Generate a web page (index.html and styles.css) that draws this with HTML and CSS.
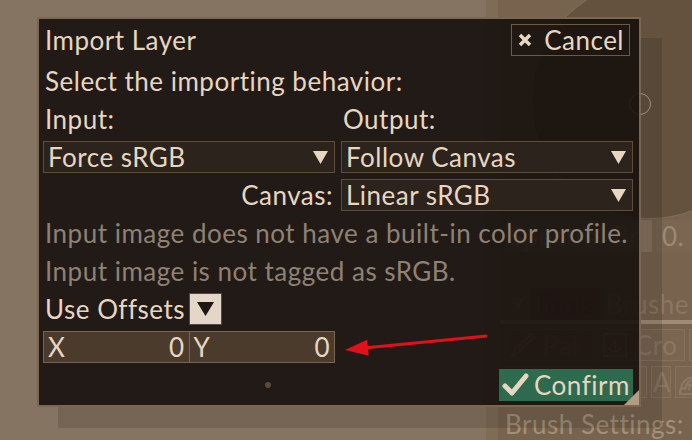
FILE: index.html
```html
<!DOCTYPE html>
<html lang="en">
<head>
    <meta charset="UTF-8">
    <title>Import Layer</title>
    <link rel="stylesheet" href="styles.css">
</head>
<body>
    <div class="screen">
        <div class="workspace"></div>

        <!-- right dock, dimmed behind the modal -->
        <aside class="dock">
            <div class="picker">
                <div class="wheel"></div>
                <div class="wheel-cursor"></div>
            </div>
            <div class="dock-row preset">
                <span class="dock-btn wide">Spectral Br</span>
                <span class="dock-field">0.</span>
            </div>
            <div class="tabs">
                <span class="fold">
                    <svg width="15" height="13" viewBox="0 0 15 13"><polygon points="0,0 15,0 7.5,13"/></svg>
                </span>
                <span class="tab active">Tools</span>
                <span class="tab">Brushe</span>
            </div>
            <div class="dock-row tools">
                <span class="dock-btn">
                    <svg width="28" height="28" viewBox="0 0 28 28"><path d="M3 25 L6 18 L22 3 L25 6 L9 22 Z"/></svg>
                    Pai
                </span>
                <span class="dock-btn">
                    <svg width="28" height="28" viewBox="0 0 28 28"><rect x="3" y="3" width="22" height="22"/><path d="M7 17 L14 21 L21 17 M14 8 L14 20"/></svg>
                    Cro
                </span>
                <span class="dock-btn"></span>
            </div>
            <div class="dock-row tools">
                <span class="dock-btn"></span>
                <span class="dock-btn short"></span>
                <span class="dock-btn narrow">A</span>
                <span class="dock-btn icon">
                    <svg width="30" height="28" viewBox="0 0 30 28"><path d="M3 22 A13 13 0 0 1 29 22 M7 22 A9 9 0 0 1 29 22 M11 22 A5 5 0 0 1 29 22"/><path d="M2 26 Q1 20 7 20 Q9 15 14 18 Q19 18 18 26 Z"/></svg>
                </span>
            </div>
            <div class="dock-label">Brush Settings:</div>
        </aside>

        <div class="dialog">
            <div class="dialog-head">
                <span class="title">Import Layer</span>
                <button class="cancel">
                    <svg width="14" height="14" viewBox="0 0 14 14"><path d="M2 2 L12 12 M12 2 L2 12"/></svg>
                    Cancel
                </button>
            </div>
            <div class="line">Select the importing behavior:</div>
            <div class="columns">
                <div class="line">Input:</div>
                <div class="line">Output:</div>
                <div class="select">
                    <span>Force sRGB</span>
                    <svg width="15" height="13" viewBox="0 0 15 13"><polygon points="0,0 15,0 7.5,13"/></svg>
                </div>
                <div class="select">
                    <span>Follow Canvas</span>
                    <svg width="15" height="13" viewBox="0 0 15 13"><polygon points="0,0 15,0 7.5,13"/></svg>
                </div>
                <div class="line right">Canvas:</div>
                <div class="select">
                    <span>Linear sRGB</span>
                    <svg width="15" height="13" viewBox="0 0 15 13"><polygon points="0,0 15,0 7.5,13"/></svg>
                </div>
            </div>
            <div class="line muted">Input image does not have a built-in color profile.</div>
            <div class="line muted">Input image is not tagged as sRGB.</div>
            <div class="offsets">
                <span class="line">Use Offsets</span>
                <span class="check">
                    <svg width="17" height="14" viewBox="0 0 17 14"><polygon points="0,0 17,0 8.5,14"/></svg>
                </span>
            </div>
            <div class="xy">
                <div class="axis"><span>X</span><span>0</span></div>
                <div class="axis"><span>Y</span><span>0</span></div>
            </div>
            <div class="dialog-foot">
                <span class="dot"></span>
                <button class="confirm">
                    <svg width="27" height="24" viewBox="0 0 27 24"><path d="M3 13 L10 20 L24 3"/></svg>
                    Confirm
                </button>
            </div>
            <span class="grip"></span>
        </div>

        <svg class="arrow" width="692" height="440" viewBox="0 0 692 440">
            <line x1="487" y1="336" x2="364" y2="348"/>
            <polygon points="345,350 368.7,355.7 367.1,339.8"/>
        </svg>
    </div>
</body>
</html>
```

FILE: styles.css
```css
* {
    box-sizing: border-box;
}

body {
    margin: 0;
    background: #857461;
    font-family: 'Lato', 'Noto Sans', sans-serif;
    font-size: 26px;
    letter-spacing: 0.5px;
    color: #e6d6c2;
}

.screen {
    position: relative;
    display: flex;
    width: 692px;
    height: 440px;
    overflow: hidden;
}

.workspace {
    width: 486px;
    flex-shrink: 0;
    background: #857461;
}

/* Dock on the right */
.dock {
    flex: 1;
    display: flex;
    flex-direction: column;
    gap: 7px;
    padding-left: 7px;
    background: #77634e;
    border-left: 12px solid #7f6c57;
    color: #9c8a77;
    white-space: nowrap;
    overflow: hidden;
}

.picker {
    position: relative;
    height: 218px;
    margin-left: -19px;
}

.wheel {
    position: absolute;
    left: 46px;
    top: -18px;
    width: 236px;
    height: 236px;
    border-radius: 50%;
    background: #64523f;
    box-shadow: 0 0 0 1px #806c57;
}

.wheel-cursor {
    position: absolute;
    left: 143px;
    top: 93px;
    width: 22px;
    height: 22px;
    border-radius: 50%;
    border: 1px solid #b3a28f;
}

.dock-row {
    display: flex;
    gap: 4px;
    height: 32px;
    flex-shrink: 0;
}

.dock-btn {
    display: flex;
    align-items: center;
    gap: 6px;
    width: 88px;
    padding: 0 3px;
    line-height: 32px;
    background: #7a6651;
    border: 1px solid #85715c;
    overflow: hidden;
    flex-shrink: 0;
}

.dock-btn.wide {
    width: 147px;
    background: #86735e;
    border-color: #86735e;
}

.dock-btn.short {
    width: 50px;
}

.dock-btn.narrow {
    width: 20px;
    padding: 0 1px;
}

.dock-btn.icon {
    width: 40px;
    padding: 0 2px;
}

.dock-btn svg {
    fill: none;
    stroke: #8c7965;
    stroke-width: 2;
    flex-shrink: 0;
}

.dock-field {
    width: 100px;
    padding-left: 6px;
    line-height: 32px;
    background: #7a6651;
    flex-shrink: 0;
}

.preset {
    margin-bottom: 29px;
}

.tabs {
    display: flex;
    align-items: stretch;
    height: 36px;
    flex-shrink: 0;
    border-bottom: 4px solid #a08c76;
    margin-left: -5px;
}

.fold {
    display: flex;
    align-items: center;
    width: 32px;
    padding-left: 10px;
}

.fold svg {
    fill: #8a7764;
}

.tab {
    padding: 0 3px;
    line-height: 32px;
    color: #8a7764;
}

.tab.active {
    background: #6a5744;
    color: #5b4a39;
    width: 76px;
}

.tools {
    margin-top: -2px;
}

.tools .dock-btn {
    color: #8a7764;
}

.dock-label {
    margin-top: 3px;
    line-height: 32px;
    color: #a39079;
}

/* Modal */
.dialog {
    position: absolute;
    left: 37px;
    top: 17px;
    width: 604px;
    height: 390px;
    padding: 5px 6px 4px 4px;
    display: flex;
    flex-direction: column;
    gap: 6px;
    background: rgba(20, 14, 11, 0.88);
    border: 2px solid #7d6650;
    box-shadow: 21px 21px 0 rgba(0, 0, 0, 0.12);
}

.dialog-head {
    display: flex;
    justify-content: space-between;
    align-items: center;
    height: 32px;
    margin-bottom: 3px;
}

.title {
    padding-left: 2px;
}

button {
    font: inherit;
    letter-spacing: inherit;
    color: inherit;
    cursor: pointer;
}

.cancel {
    display: flex;
    align-items: center;
    gap: 12px;
    height: 32px;
    margin-right: 3px;
    padding: 0 5px 0 6px;
    background: transparent;
    border: 1px solid #6e5840;
}

.cancel svg {
    stroke: #e6d6c2;
    stroke-width: 3.5;
}

.line {
    height: 32px;
    line-height: 32px;
    padding-left: 2px;
    white-space: nowrap;
}

.line.right {
    text-align: right;
    padding-right: 2px;
}

.muted {
    color: #8e8275;
}

.columns {
    display: grid;
    grid-template-columns: 292px 292px;
    column-gap: 6px;
    row-gap: 6px;
}

.columns .select:nth-of-type(1) {
    margin-top: 3px;
}

.select {
    display: flex;
    justify-content: space-between;
    align-items: center;
    height: 32px;
    padding: 0 6px 0 4px;
    background: #2c231c;
    border: 1px solid #5f4c39;
}

.select svg {
    fill: #e6d6c2;
}

.offsets {
    display: flex;
    align-items: center;
    gap: 4px;
    height: 32px;
}

.check {
    display: flex;
    justify-content: center;
    align-items: center;
    width: 33px;
    height: 32px;
    background: #e4d7c9;
    border: 1px solid #5a4838;
}

.check svg {
    fill: #1d1511;
}

.xy {
    display: flex;
    width: 292px;
    height: 32px;
}

.axis {
    flex: 1;
    display: flex;
    justify-content: space-between;
    padding: 0 4px;
    line-height: 30px;
    background: #4b3b2d;
    border: 1px solid #7a6550;
}

.axis + .axis {
    border-left: none;
}

.dialog-foot {
    display: flex;
    align-items: center;
    height: 32px;
}

.dot {
    width: 6px;
    height: 6px;
    margin-left: 222px;
    border-radius: 50%;
    background: #5a4a3c;
}

.confirm {
    display: flex;
    align-items: center;
    gap: 5px;
    height: 32px;
    margin-left: auto;
    padding: 0 4px 0 3px;
    width: 134px;
    background: #2d6a4e;
    border: none;
    white-space: nowrap;
}

.confirm svg {
    fill: none;
    stroke: #e6d6c2;
    stroke-width: 5;
    stroke-linecap: round;
    stroke-linejoin: round;
    flex-shrink: 0;
}

.grip {
    position: absolute;
    right: 0;
    bottom: 0;
    width: 0;
    height: 0;
    border-left: 15px solid transparent;
    border-bottom: 15px solid #b39c84;
}

/* Annotation */
.arrow {
    position: absolute;
    left: 0;
    top: 0;
    pointer-events: none;
}

.arrow line {
    stroke: #e3101a;
    stroke-width: 3;
}

.arrow polygon {
    fill: #e3101a;
}
```
